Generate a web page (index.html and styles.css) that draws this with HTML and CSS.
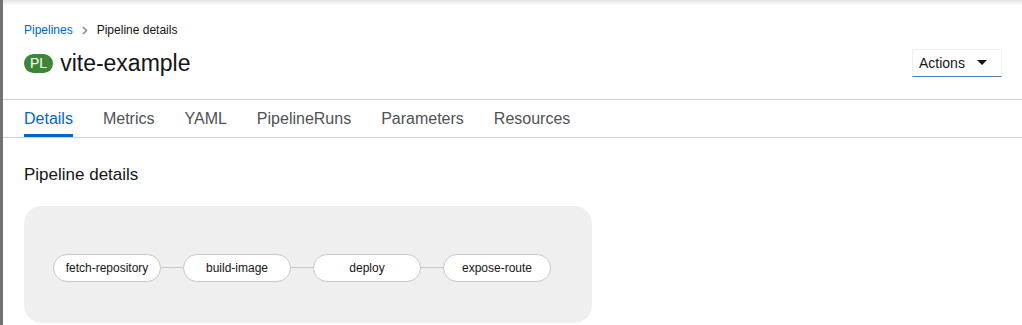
FILE: index.html
```html
<!DOCTYPE html>
<html>
<head>
<meta charset="utf-8">
<link rel="stylesheet" href="styles.css">
</head>
<body>
<div class="frame">
  <div class="page">
    <div class="header">
      <nav class="breadcrumb">
        <a class="crumb-link">Pipelines</a>
        <svg class="crumb-sep" width="6" height="9" viewBox="0 0 6 9"><path d="M1 1l3.5 3.5L1 8" fill="none" stroke="#8a8d90" stroke-width="1.6"/></svg>
        <span class="crumb-current">Pipeline details</span>
      </nav>
      <div class="title-row">
        <h1 class="title"><span class="badge">PL</span><span>vite-example</span></h1>
        <button class="actions">Actions <svg width="10" height="6" viewBox="0 0 10 6"><path d="M0 0h10L5 5z" fill="#151515"/></svg></button>
      </div>
    </div>
    <ul class="tabs">
      <li class="tab active">Details</li>
      <li class="tab">Metrics</li>
      <li class="tab">YAML</li>
      <li class="tab">PipelineRuns</li>
      <li class="tab">Parameters</li>
      <li class="tab">Resources</li>
    </ul>
    <section class="content">
      <h2 class="section-title">Pipeline details</h2>
      <div class="graph">
        <div class="node">fetch-repository</div>
        <div class="edge"></div>
        <div class="node">build-image</div>
        <div class="edge"></div>
        <div class="node">deploy</div>
        <div class="edge"></div>
        <div class="node">expose-route</div>
      </div>
    </section>
  </div>
</div>
</body>
</html>
```

FILE: styles.css
```css
* { box-sizing: border-box; }
html, body { margin: 0; padding: 0; height: 100%; }
body {
  font-family: "Liberation Sans", "Noto Sans", sans-serif;
  color: #151515;
  background: #fff;
  overflow: hidden;
}
.frame {
  height: 100%;
  border-left: 3px solid #737373;
  position: relative;
}
.frame::before {
  content: "";
  position: absolute;
  left: 0; right: 0; top: 0;
  height: 6px;
  background: linear-gradient(#e4e4e4, rgba(255,255,255,0));
}
.header {
  padding: 22px 20px 0 21px;
  height: 100px;
  border-bottom: 1px solid #d2d2d2;
}
.breadcrumb {
  display: flex;
  align-items: center;
  font-size: 12px;
  height: 16px;
}
.crumb-link { color: #0066cc; }
.crumb-sep { margin: 0 9px 0 9px; }
.crumb-current { color: #151515; }
.title-row {
  display: flex;
  justify-content: space-between;
  align-items: center;
  margin-top: 11px;
}
.title {
  margin: 0;
  display: flex;
  align-items: center;
  font-size: 23px;
  font-weight: 400;
}
.badge {
  background: #3e8635;
  color: #fff;
  font-size: 14px;
  border-radius: 10px;
  padding: 1px 6px;
  margin-right: 7px;
  line-height: 17px;
}
.actions {
  width: 90px;
  height: 28px;
  font: inherit;
  font-size: 14px;
  color: #151515;
  background: #fff;
  border: 1px solid #f0f0f0;
  border-bottom: 1px solid #4f7ea2;
  display: flex;
  align-items: center;
  justify-content: space-between;
  padding: 0 14px 0 6px;
  margin-top: 0;
}
.tabs {
  list-style: none;
  margin: 0;
  padding: 0 0 0 21px;
  display: flex;
  gap: 30px;
  border-bottom: 1px solid #d2d2d2;
  height: 38px;
}
.tab {
  font-size: 16px;
  color: #4f5255;
  padding-top: 10px;
  height: 37px;
}
.tab.active {
  color: #0066cc;
  border-bottom: 3px solid #0066cc;
}
.content { padding: 0 0 0 21px; }
.section-title {
  margin: 26px 0 0;
  font-size: 17px;
  font-weight: 400;
  line-height: 22px;
}
.graph {
  margin-top: 20px;
  width: 568px;
  height: 117px;
  background: #efefef;
  border-radius: 18px;
  display: flex;
  align-items: center;
  padding: 0 0 2px 29px;
}
.node {
  width: 108px;
  height: 28px;
  border: 1px solid #c8c8c8;
  border-radius: 14px;
  background: #fff;
  font-size: 12px;
  display: flex;
  align-items: center;
  justify-content: center;
  margin-top: 8px;
}
.edge {
  width: 22px;
  height: 1px;
  background: #c8c8c8;
  margin-top: 8px;
}
```
